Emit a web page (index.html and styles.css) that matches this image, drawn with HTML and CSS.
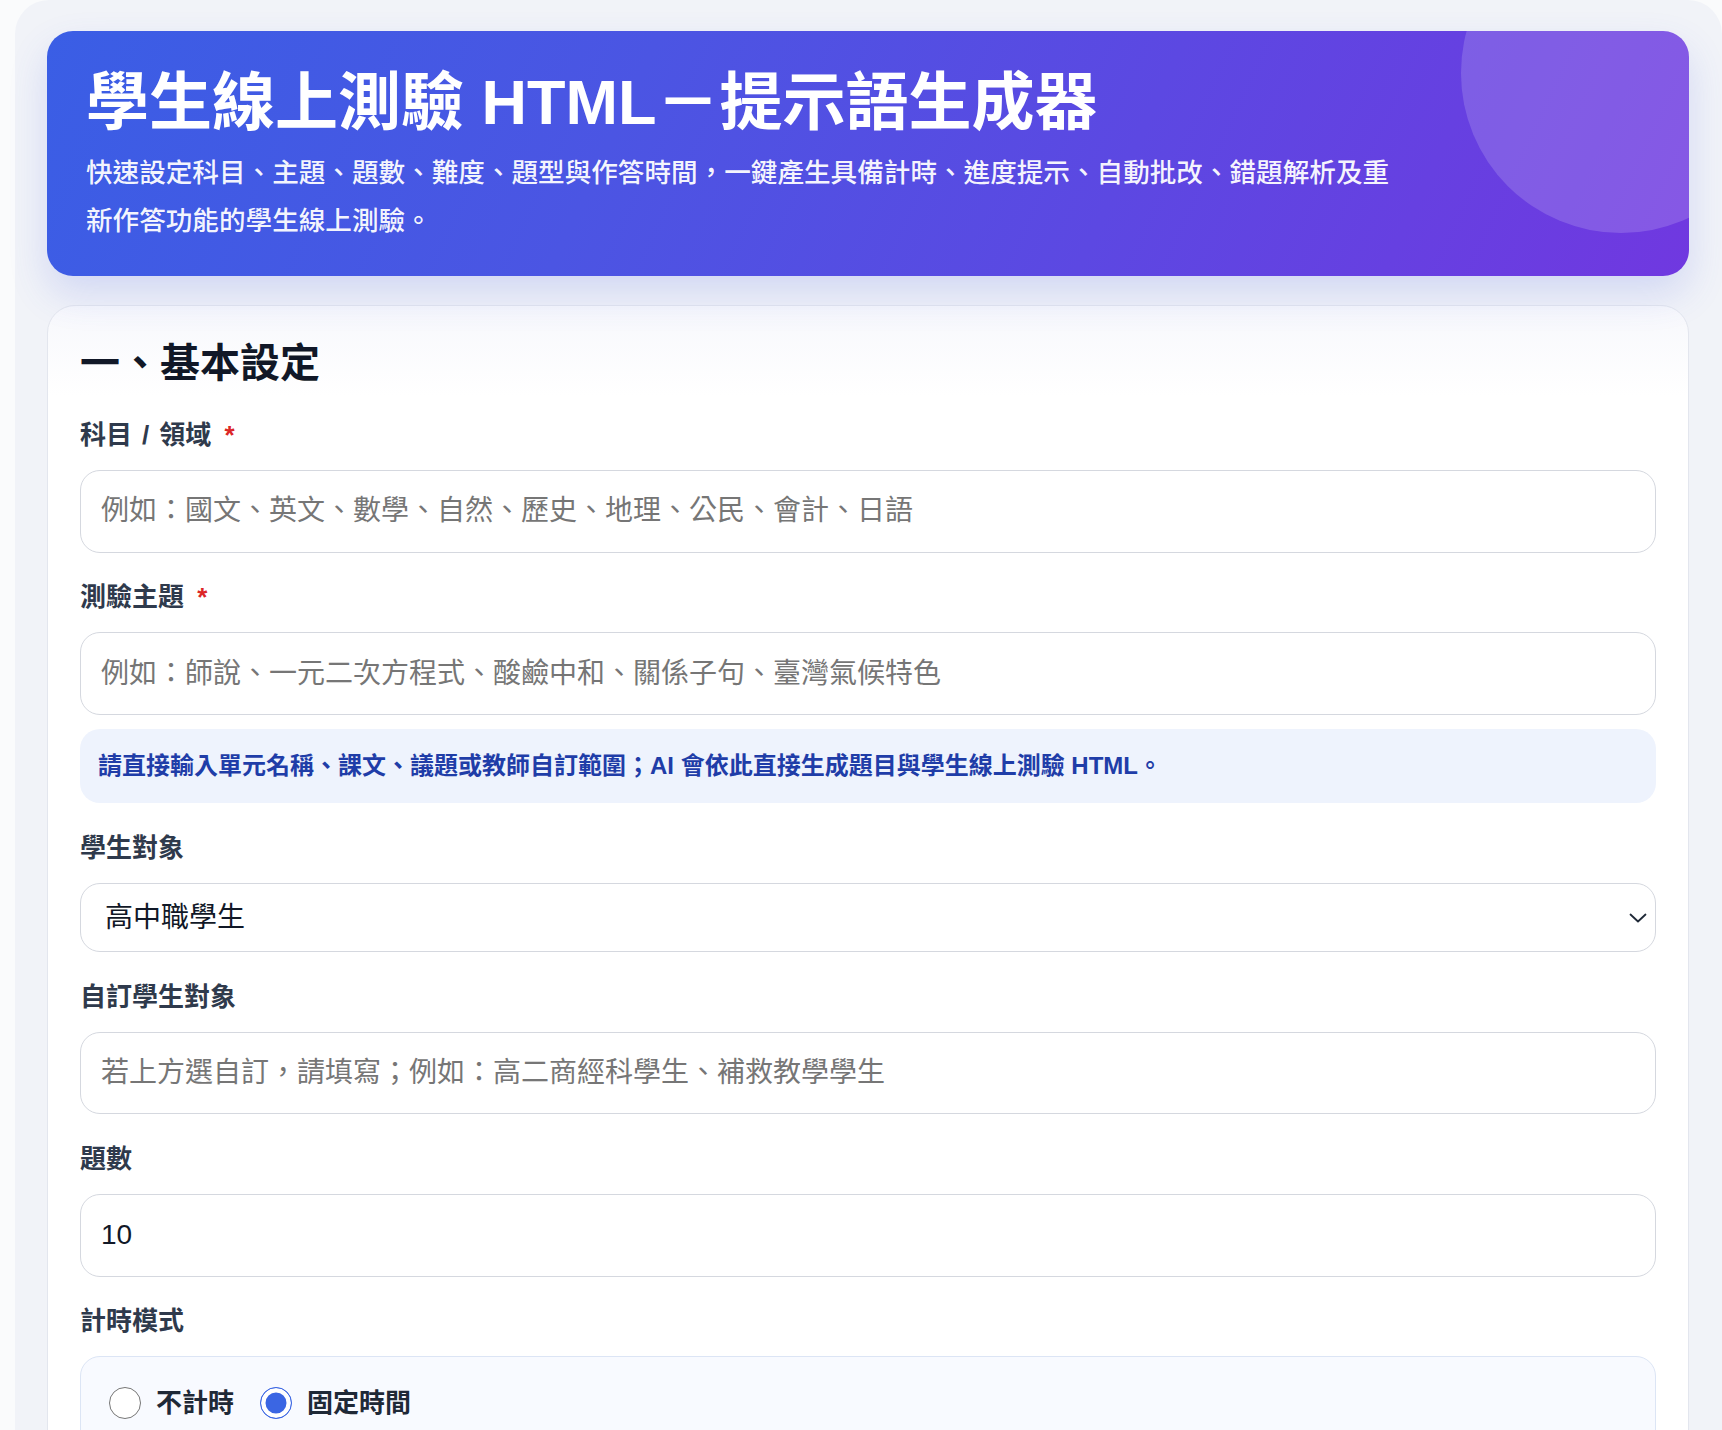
FILE: index.html
```html
<!DOCTYPE html>
<html lang="zh-Hant">
<head>
<meta charset="utf-8">
<title>學生線上測驗 HTML－提示語生成器</title>
<link rel="stylesheet" href="styles.css">
</head>
<body>
<div class="page">
  <header class="hero">
    <h1 class="hero-title">學生線上測驗 HTML－提示語生成器</h1>
    <p class="hero-sub">快速設定科目、主題、題數、難度、題型與作答時間，一鍵產生具備計時、進度提示、自動批改、錯題解析及重新作答功能的學生線上測驗。</p>
  </header>

  <section class="card">
    <h2 class="card-title">一、基本設定</h2>

    <div class="field">
      <label class="label" for="subject">科目<span class="sl">/</span>領域 <span class="req">*</span></label>
      <input class="input" id="subject" type="text" placeholder="例如：國文、英文、數學、自然、歷史、地理、公民、會計、日語">
    </div>

    <div class="field">
      <label class="label" for="topic">測驗主題 <span class="req">*</span></label>
      <input class="input" id="topic" type="text" placeholder="例如：師說、一元二次方程式、酸鹼中和、關係子句、臺灣氣候特色">
      <div class="hint">請直接輸入單元名稱、課文、議題或教師自訂範圍；AI 會依此直接生成題目與學生線上測驗 HTML。</div>
    </div>

    <div class="field">
      <label class="label" for="audience">學生對象</label>
      <div class="select-wrap">
        <select class="select" id="audience">
          <option>高中職學生</option>
          <option>國中學生</option>
          <option>國小學生</option>
          <option>大專學生</option>
          <option>自訂</option>
        </select>
        <svg class="chevron" width="18" height="10" viewBox="0 0 18 10" aria-hidden="true"><path d="M1.5 1.5 L9 8.5 L16.5 1.5" fill="none" stroke="#1f2937" stroke-width="1.8" stroke-linecap="round" stroke-linejoin="round"/></svg>
      </div>
    </div>

    <div class="field">
      <label class="label" for="custom">自訂學生對象</label>
      <input class="input" id="custom" type="text" placeholder="若上方選自訂，請填寫；例如：高二商經科學生、補救教學學生">
    </div>

    <div class="field">
      <label class="label" for="count">題數</label>
      <input class="input" id="count" type="text" value="10">
    </div>

    <div class="field">
      <span class="label">計時模式</span>
      <div class="radio-box">
        <label class="radio-opt"><input type="radio" name="timer" class="radio"><span>不計時</span></label>
        <label class="radio-opt"><input type="radio" name="timer" class="radio" checked><span>固定時間</span></label>
      </div>
    </div>
  </section>
</div>
</body>
</html>
```

FILE: styles.css
```css
* { box-sizing: border-box; }

html, body {
  margin: 0;
  padding: 0;
}

body {
  background: #fafbfc;
  font-family: "Liberation Sans", "Noto Sans CJK TC", sans-serif;
  color: #1f2937;
}

.page {
  margin-left: 15px;
  min-height: 1600px;
  background: #f1f3f8;
  border-radius: 34px 34px 0 0;
  padding: 31px 33px 40px 32px;
}

.hero {
  position: relative;
  overflow: hidden;
  border-radius: 26px;
  padding: 32px 39px 31px;
  color: #fff;
  background: linear-gradient(115deg, #3a5ee5 0%, #4b55e3 35%, #5c48e2 65%, #7038e0 100%);
  box-shadow: 0 18px 38px rgba(70, 95, 230, 0.18);
}

.hero::after {
  content: "";
  position: absolute;
  width: 320px;
  height: 320px;
  border-radius: 50%;
  top: -118px;
  right: -92px;
  background: rgba(255, 255, 255, 0.16);
}

.hero-title {
  position: relative;
  margin: 0 0 8px;
  font-size: 63px;
  line-height: 78px;
  font-weight: 700;
  letter-spacing: 0;
}

.hero-sub {
  position: relative;
  margin: 0;
  max-width: 1322px;
  font-size: 26.6px;
  line-height: 48px;
  font-weight: 500;
  color: rgba(255, 255, 255, 0.95);
}

.card {
  margin-top: 29px;
  background: linear-gradient(180deg, #f7f8fc 0px, #ffffff 90px);
  border: 1px solid #e3e6ee;
  border-radius: 28px;
  padding: 31px 32px 40px;
}

.card-title {
  margin: 0 0 28px;
  font-size: 40px;
  line-height: 52px;
  font-weight: 700;
  color: #111827;
}

.field {
  margin-bottom: 26.9px;
}

.label {
  display: block;
  margin-bottom: 17px;
  font-size: 26px;
  line-height: 36px;
  font-weight: 700;
  color: #2f3a4c;
}

.sl {
  margin: 0 10px;
}

.req {
  color: #dc2626;
  margin-left: 6px;
}

.input {
  display: block;
  width: 100%;
  height: 82.5px;
  border: 1px solid #d5d8df;
  border-radius: 20px;
  padding: 0 20px;
  background: #fff;
  font-family: "Liberation Sans", "Noto Sans CJK TC", sans-serif;
  font-size: 28px;
  color: #111827;
  outline: none;
}

.input::placeholder {
  color: #767676;
}

.hint {
  margin-top: 14px;
  padding: 22px 18px;
  background: #eef3fd;
  border-radius: 20px;
  font-size: 24px;
  line-height: 30px;
  font-weight: 700;
  color: #1f3da8;
}

.select-wrap {
  position: relative;
}

.select {
  display: block;
  width: 100%;
  height: 69px;
  border: 1px solid #d5d8df;
  border-radius: 20px;
  padding: 0 50px 0 24px;
  background: #fff;
  font-family: "Liberation Sans", "Noto Sans CJK TC", sans-serif;
  font-size: 28px;
  color: #111827;
  appearance: none;
  -webkit-appearance: none;
  outline: none;
}

.chevron {
  position: absolute;
  right: 9px;
  top: 30px;
  pointer-events: none;
}

.radio-box {
  display: flex;
  align-items: center;
  gap: 26px;
  padding: 26px 28px;
  background: #f8faff;
  border: 1px solid #dce5f5;
  border-radius: 20px;
}

.radio-opt {
  display: flex;
  align-items: center;
  gap: 15px;
  font-size: 26px;
  line-height: 40px;
  font-weight: 700;
  color: #1f2937;
}

.radio {
  appearance: none;
  -webkit-appearance: none;
  margin: 0;
  width: 32px;
  height: 32px;
  border: 1.5px solid #767676;
  border-radius: 50%;
  background: #fff;
}

.radio:checked {
  border-color: #3b66e3;
  background: #3b66e3;
  box-shadow: inset 0 0 0 4.5px #fff;
}
```
